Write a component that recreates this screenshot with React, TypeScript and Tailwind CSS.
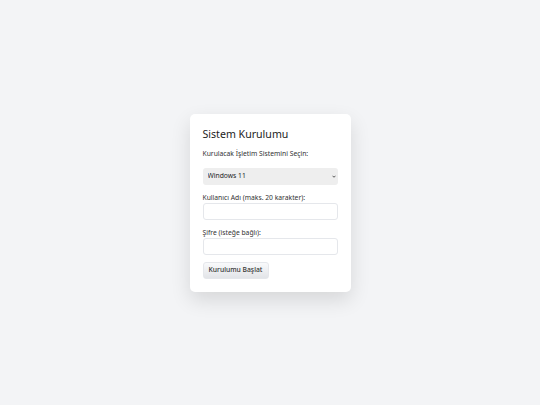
import { useState } from "react";

export default function App() {
  const [os, setOs] = useState("Windows 11");
  const [user, setUser] = useState("");
  const [pass, setPass] = useState("");

  return (
    <div className="w-[540px] h-[405px] bg-[#f3f4f6] flex items-center justify-center font-['Noto_Sans',sans-serif] text-[#1f2937]">
      <div className="w-[161px] flex flex-col bg-white rounded-[5px] px-[13px] pt-[13px] pb-[13px] shadow-[0_8px_20px_rgba(0,0,0,0.12)]">
        <h2 className="text-[10.6px] leading-[15px] mb-[7px] text-[#222]">
          Sistem Kurulumu
        </h2>

        <label className="block text-[6.75px] leading-[10px] mb-[9px] text-[#333]">
          Kurulacak İşletim Sistemini Seçin:
        </label>
        <div className="relative mb-[8px]">
          <select
            value={os}
            onChange={(e) => setOs(e.target.value)}
            className="block appearance-none w-full h-[17px] rounded-[3px] bg-[#eeeeee] pl-[5px] text-[6.75px] text-[#222] outline-none"
          >
            <option>Windows 11</option>
            <option>Windows 10</option>
            <option>Ubuntu 24.04</option>
          </select>
          <svg
            className="absolute right-[2px] top-[7px] w-[4px] h-[3px] pointer-events-none"
            viewBox="0 0 8 5"
          >
            <path d="M1 1l3 3 3-3" stroke="#333" strokeWidth="1.6" fill="none" />
          </svg>
        </div>

        <label className="block text-[6.75px] leading-[10px] text-[#333]">
          Kullanıcı Adı (maks. 20 karakter):
        </label>
        <input
          value={user}
          maxLength={20}
          onChange={(e) => setUser(e.target.value)}
          className="block w-full h-[17px] mb-[8px] rounded-[3px] border border-[#e5e7eb] bg-white px-[5px] text-[7px] outline-none"
        />

        <label className="block text-[6.75px] leading-[10px] text-[#333]">
          Şifre (isteğe bağlı):
        </label>
        <input
          type="password"
          value={pass}
          onChange={(e) => setPass(e.target.value)}
          className="block w-full h-[17px] mb-[7px] rounded-[3px] border border-[#e5e7eb] bg-white px-[5px] text-[7px] outline-none"
        />

        <button className="block self-start w-[66px] h-[17px] rounded-[3px] border border-[#e5e7eb] bg-gradient-to-b from-[#f9fafb] to-[#e2e4e8] text-[6.75px] leading-[10px] font-medium text-[#333]">
          Kurulumu Başlat
        </button>
      </div>
    </div>
  );
}
